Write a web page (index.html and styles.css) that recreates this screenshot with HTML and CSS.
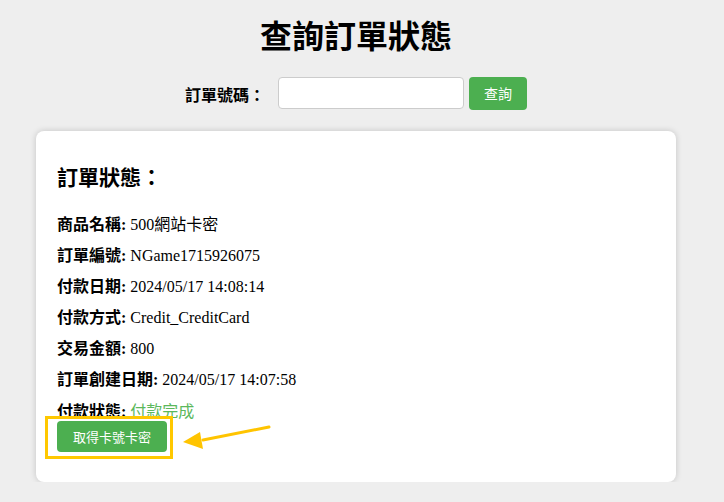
FILE: index.html
```html
<!DOCTYPE html>
<html lang="zh-Hant">
<head>
<meta charset="utf-8">
<link rel="stylesheet" href="styles.css">
</head>
<body>
<div class="page">
  <h1 class="title">查詢訂單狀態</h1>
  <form class="search">
    <label class="search-label">訂單號碼：</label>
    <input class="search-input" type="text">
    <button class="btn search-btn" type="button">查詢</button>
  </form>
  <section class="card">
    <h2 class="card-title">訂單狀態：</h2>
    <p class="row"><strong>商品名稱:</strong> 500網站卡密</p>
    <p class="row"><strong>訂單編號:</strong> NGame1715926075</p>
    <p class="row"><strong>付款日期:</strong> 2024/05/17 14:08:14</p>
    <p class="row"><strong>付款方式:</strong> Credit_CreditCard</p>
    <p class="row"><strong>交易金額:</strong> 800</p>
    <p class="row"><strong>訂單創建日期:</strong> 2024/05/17 14:07:58</p>
    <p class="row"><strong>付款狀態:</strong> <span class="ok">付款完成</span></p>
    <div class="action">
      <button class="btn get-btn" type="button">取得卡號卡密</button>
      <span class="highlight"></span>
      <svg class="arrow" width="90" height="30" viewBox="0 0 90 30">
        <line x1="86" y1="3" x2="20" y2="16" stroke="#ffc400" stroke-width="3" stroke-linecap="round"/>
        <polygon points="0,18 17,8 20,25" fill="#ffc400"/>
      </svg>
    </div>
  </section>
</div>
</body>
</html>
```
FILE: styles.css
```css
html, body {
  margin: 0;
  padding: 0;
  background: #eeeeee;
}
body {
  font-family: "Liberation Serif", "Noto Sans CJK TC", serif;
  color: #000;
}
.page {
  width: 640px;
  margin-left: 36px;
  padding-top: 14px;
}
.title {
  margin: 0;
  text-align: center;
  font-family: "Noto Sans CJK TC", sans-serif;
  font-size: 32px;
  font-weight: 700;
  line-height: 40px;
}
.search {
  margin-top: 22px;
  display: flex;
  align-items: center;
  justify-content: center;
  height: 34px;
}
.search-label {
  font-family: "Noto Sans CJK TC", sans-serif;
  font-weight: 700;
  font-size: 16px;
  margin-right: 13px;
  margin-top: 2px;
}
.search-input {
  width: 186px;
  height: 32px;
  box-sizing: border-box;
  border: 1px solid #cccccc;
  border-radius: 4px;
  background: #fff;
  margin: 0 5px 0 0;
  padding: 0 8px;
}
.btn {
  background: #4caf50;
  color: #fff;
  border: none;
  border-radius: 4px;
  font-family: "Noto Sans CJK TC", sans-serif;
}
.search-btn {
  width: 58px;
  height: 33px;
  font-size: 14px;
  padding: 0;
}
.card {
  margin-top: 21px;
  background: #fff;
  border-radius: 8px;
  box-shadow: 0 0 6px rgba(0, 0, 0, 0.18);
  padding: 28px 20px 30px 21px;
}
.card-title {
  margin: 0 0 16px;
  font-family: "Noto Sans CJK TC", sans-serif;
  font-size: 21px;
  font-weight: 700;
  line-height: 34px;
}
.row {
  margin: 0;
  font-size: 16px;
  line-height: 31px;
}
.row strong {
  font-weight: 700;
}
.ok {
  color: #5cb85c;
  font-family: "Noto Sans CJK TC", sans-serif;
}
.action {
  position: relative;
  display: flex;
  margin-top: -6px;
  height: 31px;
}
.get-btn {
  display: block;
  width: 110px;
  height: 31px;
  font-size: 13px;
  padding: 0;
}
.highlight {
  position: absolute;
  left: -12px;
  top: -5px;
  width: 128px;
  height: 43px;
  box-sizing: border-box;
  border: 3px solid #ffc800;
}
.arrow {
  position: absolute;
  left: 126px;
  top: 3px;
}
```
